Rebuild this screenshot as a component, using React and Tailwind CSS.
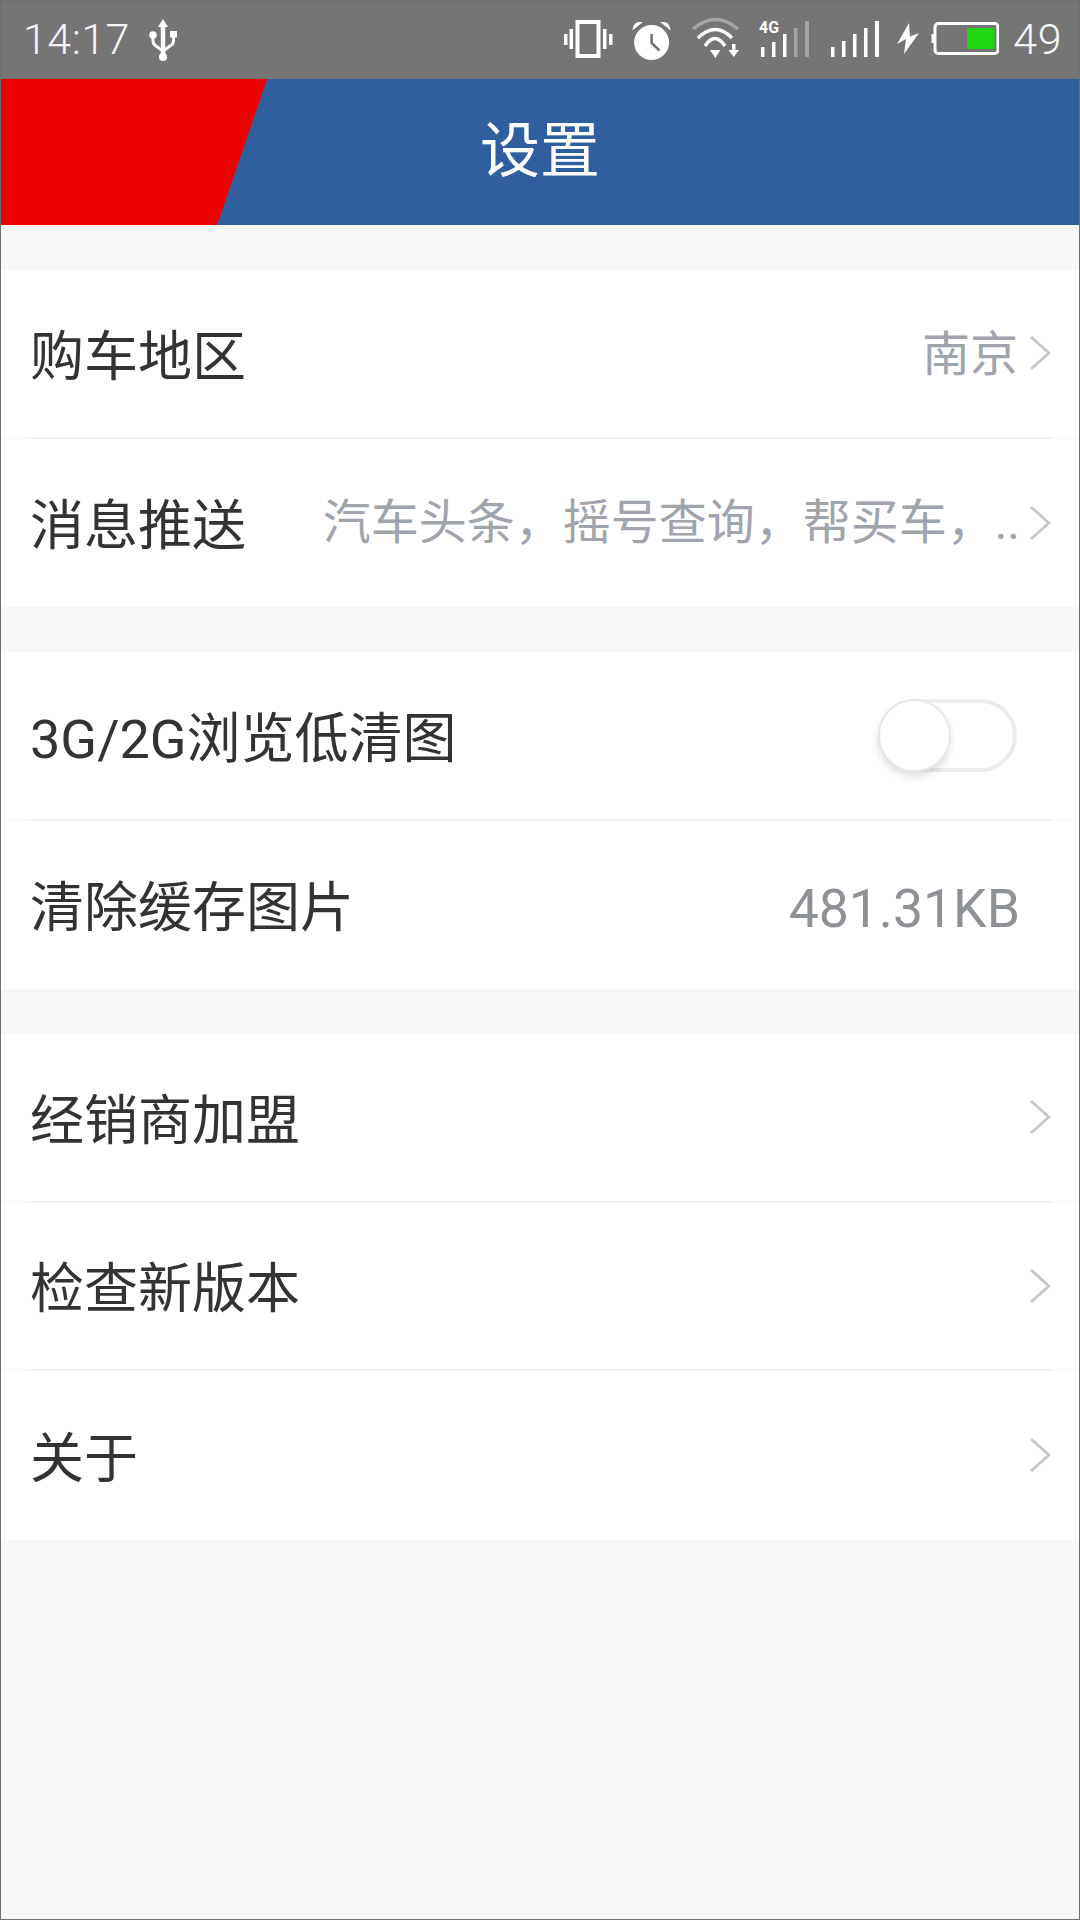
const FONT = "font-['Roboto','Noto_Sans_CJK_SC',sans-serif]";

function Chevron() {
  return (
    <svg width="22" height="36" viewBox="0 0 22 36" className="shrink-0" fill="none">
      <path d="M2 2 L20 18 L2 34" stroke="#c6c6c8" strokeWidth="2.8" />
    </svg>
  );
}

function Separator() {
  return (
    <div className="h-[2px] bg-[#fafafa]">
      <div className="h-full ml-[29px] mr-[28px] bg-[#f1f1f1]" />
    </div>
  );
}

function Row({ label, value, chevron, last, valueClass }) {
  return (
    <div className="h-[168.5px] flex flex-col">
      <div className="flex-1 flex items-center pl-[29px] pr-[28px]">
        <span className="text-[54px] text-[#333333] whitespace-nowrap pt-[8px]">{label}</span>
        <div className="flex-1" />
        {value && <span className={valueClass}>{value}</span>}
        {chevron && <Chevron />}
      </div>
      {!last && <Separator />}
    </div>
  );
}

// drawn in page coordinates, x 560..1000
function StatusIcons() {
  return (
    <svg width="440" height="78" viewBox="560 0 440 78" fill="none" className="shrink-0">
      {/* vibrate */}
      <rect x="565" y="33" width="3.5" height="11" fill="#fff" />
      <rect x="570.5" y="28" width="3.5" height="20" fill="#fff" />
      <rect x="578.5" y="21" width="21" height="34" stroke="#fff" strokeWidth="4" />
      <rect x="604" y="28" width="3.5" height="20" fill="#fff" />
      <rect x="610" y="33" width="3.5" height="11" fill="#fff" />
      {/* alarm */}
      <circle cx="652.6" cy="41.5" r="17.5" fill="#fff" />
      <path d="M652.6 33 V42 L660.5 49.5" stroke="#757575" strokeWidth="2.6" />
      <path d="M635 27 Q636 22 641 22 Z M670 27 Q669 22 664 22 Z" fill="#fff" stroke="#fff" strokeWidth="2" />
      {/* wifi */}
      <path d="M694 28 Q716.5 9 739 28" stroke="#a3a3a3" strokeWidth="3.4" />
      <path d="M699 37 Q716.5 20 733 37" stroke="#fff" strokeWidth="3.4" />
      <path d="M706 45 Q716 30 726 45" stroke="#fff" strokeWidth="3.4" />
      <path d="M711 49 H721.5 L716.3 57 Z" fill="#fff" />
      <path d="M733 43 H736.5 V49 H740 L734.7 56 L729.4 49 H733 Z" fill="#fff" />
      {/* 4G */}
      <text x="760" y="32" fill="#fff" fontSize="16" fontWeight="700" fontFamily="Roboto">4G</text>
      <rect x="762" y="46" width="3.5" height="10" fill="#fff" />
      <rect x="773" y="41" width="3.5" height="15" fill="#fff" />
      <rect x="784" y="33" width="3.5" height="23" fill="#fff" />
      <rect x="795" y="27" width="3.5" height="29" fill="#a3a3a3" />
      <rect x="806" y="20" width="4" height="36" fill="#a3a3a3" />
      {/* signal */}
      <rect x="832" y="46" width="3.5" height="10" fill="#fff" />
      <rect x="843" y="40" width="3.5" height="16" fill="#fff" />
      <rect x="854" y="33" width="3.5" height="23" fill="#fff" />
      <rect x="865" y="27" width="3.5" height="29" fill="#fff" />
      <rect x="876" y="20" width="4" height="36" fill="#fff" />
      {/* bolt */}
      <path d="M910 22 L898 43 L907 38 L905 53 L920 32 L911 35.5 Z" fill="#fff" />
      {/* battery */}
      <rect x="936" y="22.5" width="63" height="30" rx="3.5" stroke="#fff" strokeWidth="3" />
      <rect x="932.5" y="33" width="2.5" height="9" fill="#fff" />
      <rect x="968" y="27" width="27.5" height="21" fill="#22d614" />
    </svg>
  );
}

export default function App() {
  return (
    <div className={`${FONT} w-[1080px] h-[1920px] bg-[#f7f7f7] border border-[#6f6f6f] flex flex-col overflow-hidden`}>
      <div className="h-[78px] bg-[#757575] flex items-center justify-between pl-[22px] pr-[17px] shrink-0">
        <div className="flex items-center gap-[18px]">
          <span className="text-[43px] font-light text-[#f5f5f5] tracking-[0.5px] pb-[2px]">14:17</span>
          <svg width="30" height="46" viewBox="149 14 30 46" fill="none">
            <path d="M164 16 L169 24 H166.2 V52 H161.8 V24 H159 Z" fill="#fff" />
            <circle cx="164" cy="54" r="4" fill="#fff" />
            <circle cx="154" cy="32" r="3.8" fill="#fff" />
            <rect x="171" y="28" width="7" height="6.5" fill="#fff" />
            <path d="M154 34 V38 Q154 41 157 43 L164 48 L171 43 Q174.5 41 174.5 38 V34" stroke="#fff" strokeWidth="3" />
          </svg>
        </div>
        <div className="flex items-center">
          <StatusIcons />
          <span className="text-[43px] font-light text-[#f5f5f5] ml-[14px] tracking-[0.5px] pb-[2px]">49</span>
        </div>
      </div>

      <div className="relative h-[146px] bg-[#2f5f9e] flex items-center justify-center shrink-0">
        <svg className="absolute left-0 top-0" width="267" height="146" viewBox="0 0 267 146">
          <polygon points="0,0 266,0 216,146 0,146" fill="#ec0000" />
        </svg>
        <span className="relative text-[60px] text-white">设置</span>
      </div>

      <div className="mt-[45px] bg-white">
        <Row label="购车地区" value="南京" chevron valueClass="text-[48px] text-[#a0a4ac] mr-[11px] pt-[4px]" />
        <Row
          label="消息推送"
          value="汽车头条，摇号查询，帮买车，.."
          chevron
          last
          valueClass="text-[48px] text-[#a0a4ac] whitespace-nowrap mr-[9px]"
        />
      </div>

      <div className="mt-[45px] bg-white">
        <div className="h-[168.5px] flex flex-col">
          <div className="flex-1 flex items-center justify-between pl-[29px] pr-[62px]">
            <span className="text-[54px] text-[#333333] pt-[8px]">3G/2G浏览低清图</span>
            <div className="relative w-[139px] h-[73px] rounded-full border-[4px] border-[#ececec]">
              <div className="absolute left-[-4px] top-[-4px] w-[73px] h-[73px] rounded-full bg-white border-2 border-[#e8e8e8] shadow-[0_5px_7px_rgba(0,0,0,0.12)]" />
            </div>
          </div>
          <Separator />
        </div>
        <Row label="清除缓存图片" value="481.31KB" last valueClass="text-[53.5px] text-[#8e9196] mr-[31px] pt-[8px]" />
      </div>

      <div className="mt-[45px] bg-white">
        <Row label="经销商加盟" chevron />
        <Row label="检查新版本" chevron />
        <Row label="关于" chevron last />
      </div>
    </div>
  );
}
